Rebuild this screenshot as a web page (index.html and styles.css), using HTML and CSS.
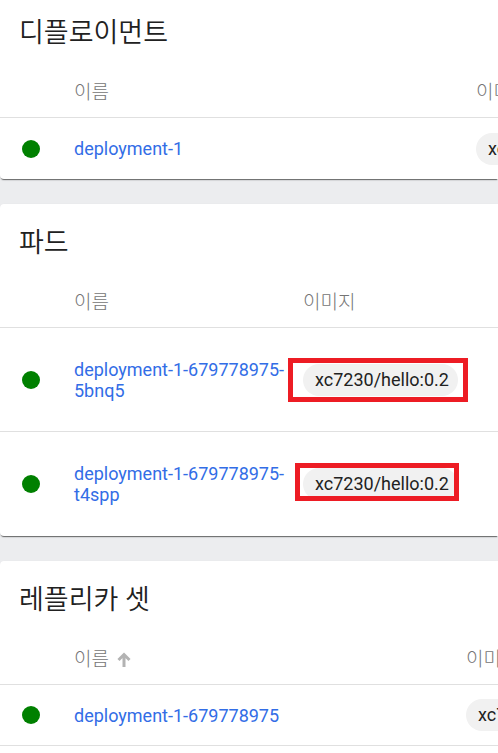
FILE: index.html
```html
<!DOCTYPE html>
<html lang="ko">
<head>
<meta charset="utf-8">
<title>워크로드</title>
<link rel="stylesheet" href="styles.css">
</head>
<body>
<main class="workloads">
  <section class="card card-first">
    <h2 class="card-title">디플로이먼트</h2>
    <table class="list">
      <colgroup><col class="col-status"><col class="col-name-deployments"><col></colgroup>
      <thead><tr><td></td><th scope="col">이름</th><th scope="col">이미지</th></tr></thead>
      <tbody>
        <tr>
          <td><span class="status"></span></td>
          <td><a class="name" href="#">deployment-1</a></td>
          <td><span class="chip">xc7230/hello:0.2</span></td>
        </tr>
      </tbody>
    </table>
  </section>

  <section class="card">
    <h2 class="card-title">파드</h2>
    <table class="list list-tall">
      <colgroup><col class="col-status"><col class="col-name-pods"><col></colgroup>
      <thead><tr><td></td><th scope="col">이름</th><th scope="col">이미지</th></tr></thead>
      <tbody>
        <tr>
          <td><span class="status"></span></td>
          <td><a class="name" href="#">deployment-1-679778975-5bnq5</a></td>
          <td><span class="chip">xc7230/hello:0.2<span class="mark mark-wide"></span></span></td>
        </tr>
        <tr>
          <td><span class="status"></span></td>
          <td><a class="name" href="#">deployment-1-679778975-t4spp</a></td>
          <td><span class="chip">xc7230/hello:0.2<span class="mark mark-narrow"></span></span></td>
        </tr>
      </tbody>
    </table>
  </section>

  <section class="card">
    <h2 class="card-title">레플리카 셋</h2>
    <table class="list">
      <colgroup><col class="col-status"><col class="col-name-replicasets"><col></colgroup>
      <thead>
        <tr>
          <td></td>
          <th scope="col"><span class="sorted">이름
            <svg class="arrow" viewBox="0 0 14 16" aria-hidden="true"><path d="M7 15V3M1.500 8 7 2.500 12.500 8" fill="none" stroke="currentColor" stroke-width="3"/></svg></span></th>
          <th scope="col">이미지</th>
        </tr>
      </thead>
      <tbody>
        <tr class="row-more">
          <td><span class="status"></span></td>
          <td><a class="name" href="#">deployment-1-679778975</a></td>
          <td><span class="chip">xc7230/hello:0.2</span></td>
        </tr>
      </tbody>
    </table>
    <div class="card-footer"></div>
  </section>
</main>
</body>
</html>
```
FILE: styles.css
```css
* {
  box-sizing: border-box;
}

body {
  margin: 0;
  overflow: hidden;
  background: #ecedef;
  color: #212121;
  font-family: Roboto, "Noto Sans CJK KR", sans-serif;
  font-size: 18px;
  line-height: 21px;
}

.workloads {
  display: flex;
  flex-direction: column;
  gap: 25px;
}

.card {
  background: #fff;
  border-radius: 4px 0 0 4px;
  box-shadow: 0 2px 1px -1px rgba(0, 0, 0, 0.5), 0 1px 2px rgba(0, 0, 0, 0.15);
  clip-path: inset(-1px 0 -4px 0);
}

.card-title {
  margin: 0;
  padding: 21px 19px 7px;
  font-size: 27px;
  font-weight: 350;
  line-height: 36px;
}

.card-first {
  border-top-left-radius: 0;
}

.card-first .card-title {
  padding-top: 15px;
}

.list {
  width: 100%;
  table-layout: fixed;
  border-collapse: separate;
  border-spacing: 0;
}

.col-status {
  width: 74px;
}

.col-name-deployments {
  width: 402px;
}

.col-name-pods {
  width: 229px;
}

.col-name-replicasets {
  width: 392px;
}

.list th,
.list td {
  height: 61px;
  padding: 0;
  text-align: left;
  vertical-align: middle;
  white-space: nowrap;
}

.list thead th,
.list thead td {
  height: 60px;
  padding-top: 10px;
  border-bottom: 1px solid #e0e0e0;
  color: #757575;
  font-size: 19px;
  font-weight: 300;
}

.list-tall tbody td {
  height: 104px;
}

.list tbody tr:not(:last-child) td,
.list .row-more td {
  border-bottom: 1px solid #e0e0e0;
}

.list tbody td:nth-child(2) {
  padding-right: 8px;
  white-space: normal;
}

.status {
  display: block;
  width: 18px;
  height: 18px;
  margin-left: 22px;
  border-radius: 50%;
  background: #008000;
}

.name {
  color: #326de6;
  text-decoration: none;
}

.chip {
  position: relative;
  display: inline-block;
  padding: 0 9px 0 12px;
  border-radius: 16px;
  background: #f1f1f1;
  line-height: 32px;
  vertical-align: middle;
}

.mark {
  position: absolute;
  border: 5px solid #ed1c24;
}

.mark-wide {
  inset: -6px -10px -6px -15px;
}

.mark-narrow {
  inset: -5px -1px -1px -8px;
}

.sorted {
  display: inline-flex;
  align-items: center;
  gap: 8px;
}

.arrow {
  width: 14px;
  height: 16px;
  color: #b3b3b3;
}

.card-footer {
  height: 60px;
}
```
